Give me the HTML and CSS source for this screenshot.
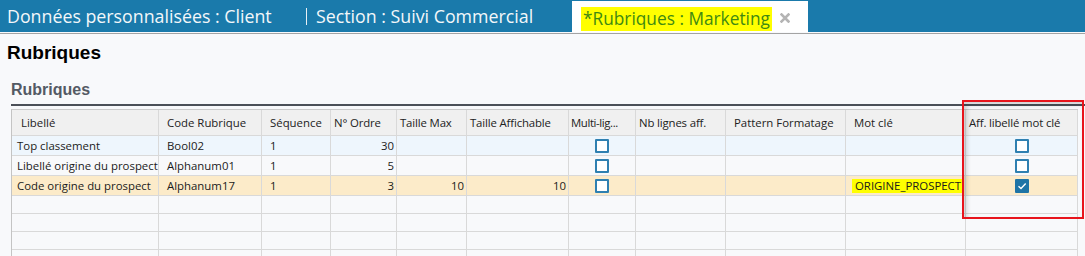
FILE: index.html
```html
<!DOCTYPE html>
<html lang="fr">
<head>
    <meta charset="UTF-8">
    <title>Rubriques : Marketing</title>
    <link rel="stylesheet" href="styles.css">
</head>
<body>
    <!-- Onglets -->
    <div class="tabs">
        <div class="tab">Données personnalisées : Client</div>
        <div class="tab-sep"></div>
        <div class="tab">Section : Suivi Commercial</div>
        <div class="tab active">
            <span class="tab-label">*Rubriques : Marketing</span>
            <svg class="tab-close" width="10" height="10" viewBox="0 0 10 10">
                <path d="M1.5 1.5 L8.5 8.5 M8.5 1.5 L1.5 8.5" stroke="#b4b4b4" stroke-width="2.6" stroke-linecap="square"/>
            </svg>
        </div>
    </div>
    <div class="tabs-rule"></div>

    <div class="page">
        <h1 class="page-title">Rubriques</h1>
        <h2 class="section-title">Rubriques</h2>
        <div class="section-rule"></div>

        <table class="grid">
            <colgroup>
                <col style="width:147px">
                <col style="width:103px">
                <col style="width:69px">
                <col style="width:66px">
                <col style="width:70px">
                <col style="width:102px">
                <col style="width:67px">
                <col style="width:90px">
                <col style="width:120px">
                <col style="width:120px">
                <col style="width:112px">
            </colgroup>
            <thead>
                <tr>
                    <th class="first">Libellé</th>
                    <th>Code Rubrique</th>
                    <th>Séquence</th>
                    <th class="tight">N° Ordre</th>
                    <th class="tight">Taille Max</th>
                    <th class="tight">Taille Affichable</th>
                    <th class="tight squeeze">Multi-lig...</th>
                    <th class="tight">Nb lignes aff.</th>
                    <th>Pattern Formatage</th>
                    <th>Mot clé</th>
                    <th class="tight">Aff. libellé mot clé</th>
                </tr>
            </thead>
            <tbody>
                <tr class="row-hover">
                    <td class="first">Top classement</td>
                    <td>Bool02</td>
                    <td>1</td>
                    <td class="num">30</td>
                    <td class="num"></td>
                    <td class="num"></td>
                    <td class="check"><span class="box"></span></td>
                    <td></td>
                    <td></td>
                    <td></td>
                    <td class="check"><span class="box"></span></td>
                </tr>
                <tr>
                    <td class="first">Libellé origine du prospect</td>
                    <td>Alphanum01</td>
                    <td>1</td>
                    <td class="num">5</td>
                    <td class="num"></td>
                    <td class="num"></td>
                    <td class="check"><span class="box"></span></td>
                    <td></td>
                    <td></td>
                    <td></td>
                    <td class="check"><span class="box"></span></td>
                </tr>
                <tr class="row-selected">
                    <td class="first">Code origine du prospect</td>
                    <td>Alphanum17</td>
                    <td>1</td>
                    <td class="num">3</td>
                    <td class="num">10</td>
                    <td class="num">10</td>
                    <td class="check"><span class="box"></span></td>
                    <td></td>
                    <td></td>
                    <td><span class="mark">ORIGINE_PROSPECT</span></td>
                    <td class="check">
                        <span class="box checked">
                            <svg width="10" height="8" viewBox="0 0 10 8"><path d="M1.5 4.2 L4 6.5 L8.7 1.5" fill="none" stroke="#fff" stroke-width="1.4"/></svg>
                        </span>
                    </td>
                </tr>
                <tr class="empty"><td></td><td></td><td></td><td></td><td></td><td></td><td></td><td></td><td></td><td></td><td></td></tr>
                <tr class="empty"><td></td><td></td><td></td><td></td><td></td><td></td><td></td><td></td><td></td><td></td><td></td></tr>
                <tr class="empty"><td></td><td></td><td></td><td></td><td></td><td></td><td></td><td></td><td></td><td></td><td></td></tr>
                <tr class="empty"><td></td><td></td><td></td><td></td><td></td><td></td><td></td><td></td><td></td><td></td><td></td></tr>
            </tbody>
        </table>

        <!-- encadré rouge d'annotation -->
        <div class="callout"></div>
    </div>
</body>
</html>
```

FILE: styles.css
```css
body {
    margin: 0;
    background-color: #f8f9fb;
    font-family: "Open Sans", "Noto Sans", sans-serif;
    color: #1b1b1b;
    overflow: hidden;
}

/* Onglets */
.tabs {
    display: flex;
    align-items: flex-end;
    height: 32px;
    background-color: #1a7aab;
}

.tab {
    height: 32px;
    display: flex;
    align-items: center;
    padding: 0 7px;
    font-size: 17.8px;
    color: #f3f7fa;
    white-space: nowrap;
}

.tab:first-child {
    width: 292px;
}

.tab-sep {
    width: 1px;
    height: 17px;
    margin: 0 2px 7px 0;
    background-color: #e8f0f5;
}

.tab:nth-child(3) {
    width: 249px;
}

.tab.active {
    height: 31px;
    width: 236px;
    box-sizing: border-box;
    padding: 0 0 0 9px;
    background-color: #ffffff;
    align-items: flex-start;
}

.tab-label {
    margin-top: 6px;
    height: 24px;
    line-height: 24px;
    padding: 0 2px;
    background-color: #ffff00;
    color: #3f8a12;
    font-size: 17.3px;
}

.tab-close {
    margin: 12px 0 0 8px;
}

.tabs-rule {
    margin-top: 1px;
    height: 1px;
    background-color: #a3a3a3;
}

/* Page */
.page {
    position: relative;
    padding-top: 8px;
}

.page-title {
    margin: 0 0 0 7px;
    font-family: "Liberation Sans", Arial, sans-serif;
    font-size: 19px;
    line-height: 22px;
    font-weight: bold;
    color: #000;
}

.section-title {
    margin: 16px 0 0 11px;
    font-family: "Liberation Sans", Arial, sans-serif;
    font-size: 16px;
    line-height: 20px;
    font-weight: bold;
    color: #545a64;
}

.section-rule {
    margin: 4px 0 0 11px;
    height: 2px;
    background-color: #4b5058;
}

/* Grille */
.grid {
    margin: 3px 0 0 11px;
    table-layout: fixed;
    width: 1067px;
    border-collapse: separate;
    border-spacing: 0;
    border-top: 1px solid #cbcbcb;
    border-left: 1px solid #c4c4c4;
    font-size: 11.4px;
}

.grid th,
.grid td {
    padding: 0 0 0 8px;
    border-right: 1px solid #d9d9d9;
    border-bottom: 1px solid #d9d9d9;
    white-space: nowrap;
    overflow: hidden;
    text-align: left;
}

.grid th {
    height: 25px;
    font-weight: normal;
    color: #222;
    background-color: #f0f0f0;
}

.grid th.first {
    padding-left: 9px;
}

.grid th.tight {
    padding-left: 3px;
    letter-spacing: -0.15px;
}

.grid th.squeeze {
    padding-left: 2px;
    letter-spacing: -0.4px;
}

.grid td {
    height: 19px;
}

.grid td.first {
    padding-left: 5px;
}

.grid td.num {
    text-align: right;
    padding: 0 2px 0 0;
}

.grid td.check {
    text-align: center;
    padding: 0;
}

.row-hover td {
    background-color: #eef6fd;
}

.row-selected td {
    background-color: #fcebc9;
}

.grid tr.empty td {
    height: 17px;
}

.box {
    display: inline-block;
    vertical-align: middle;
    width: 10px;
    height: 10px;
    border: 2px solid #2f80b1;
    background-color: #ffffff;
    border-radius: 1px;
    position: relative;
}

.box.checked {
    background-color: #1f74a6;
    border-color: #1f74a6;
}

.box svg {
    position: absolute;
    left: 0;
    top: 1px;
}

.mark {
    display: inline-block;
    padding: 0 3px;
    margin-left: -2px;
    line-height: 14px;
    background-color: #ffff00;
}

.callout {
    position: absolute;
    left: 962px;
    top: 66px;
    width: 118px;
    height: 115px;
    border: 2px solid #e8141c;
    box-shadow: inset 3px 3px 4px rgba(0, 0, 0, 0.16);
}
```
